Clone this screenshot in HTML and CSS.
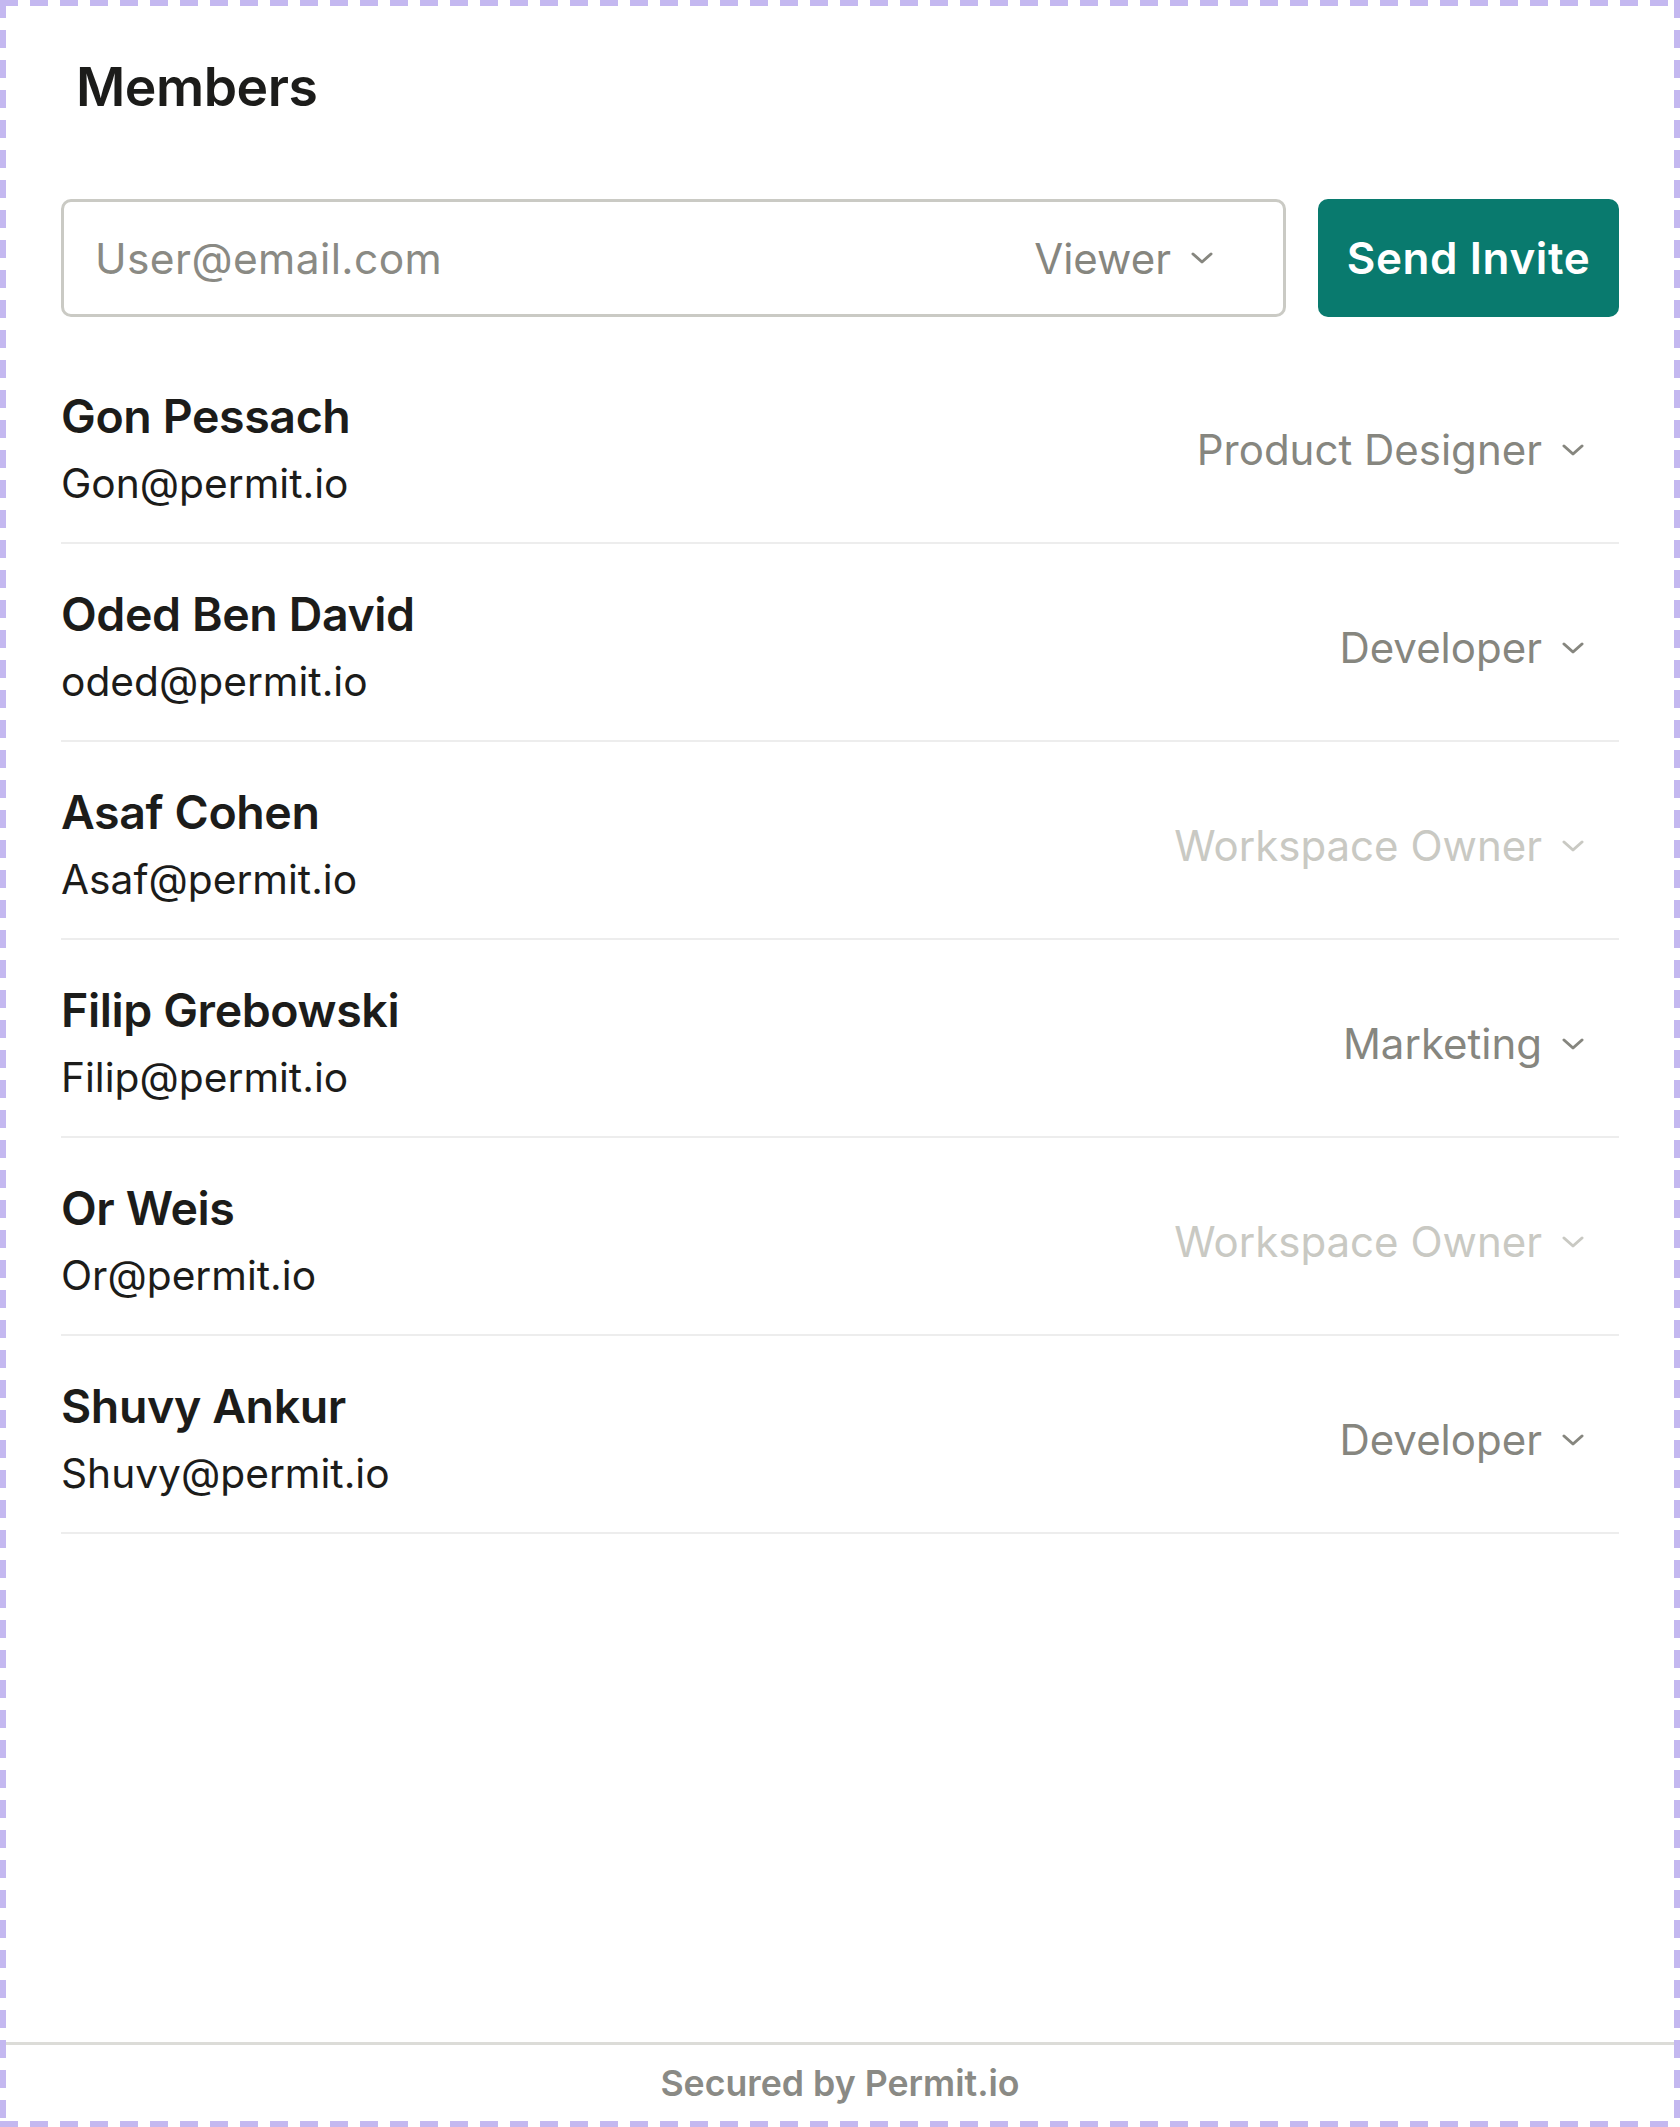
FILE: index.html
```html
<!DOCTYPE html>
<html lang="en">
<head>
<meta charset="utf-8">
<title>Members</title>
<link rel="stylesheet" href="styles.css">
</head>
<body>
<div class="frame">
  <main class="main">
    <h1 class="title">Members</h1>
    <div class="invite">
      <div class="field">
        <span class="placeholder">User@email.com</span>
        <span class="select">Viewer
          <svg class="chev" viewBox="0 0 22 12" width="22" height="12"><path d="M2 2 L11 10 L20 2" fill="none" stroke="currentColor" stroke-width="3" stroke-linecap="round" stroke-linejoin="round"/></svg>
        </span>
      </div>
      <button class="send">Send Invite</button>
    </div>
    <ul class="list">
      <li class="row">
        <div class="who"><div class="name">Gon Pessach</div><div class="email">Gon@permit.io</div></div>
        <div class="role">Product Designer <svg class="chev" viewBox="0 0 22 12" width="22" height="12"><path d="M2 2 L11 10 L20 2" fill="none" stroke="currentColor" stroke-width="3" stroke-linecap="round" stroke-linejoin="round"/></svg></div>
      </li>
      <li class="row">
        <div class="who"><div class="name">Oded Ben David</div><div class="email">oded@permit.io</div></div>
        <div class="role">Developer <svg class="chev" viewBox="0 0 22 12" width="22" height="12"><path d="M2 2 L11 10 L20 2" fill="none" stroke="currentColor" stroke-width="3" stroke-linecap="round" stroke-linejoin="round"/></svg></div>
      </li>
      <li class="row">
        <div class="who"><div class="name">Asaf Cohen</div><div class="email">Asaf@permit.io</div></div>
        <div class="role role-disabled">Workspace Owner <svg class="chev" viewBox="0 0 22 12" width="22" height="12"><path d="M2 2 L11 10 L20 2" fill="none" stroke="currentColor" stroke-width="3" stroke-linecap="round" stroke-linejoin="round"/></svg></div>
      </li>
      <li class="row">
        <div class="who"><div class="name">Filip Grebowski</div><div class="email">Filip@permit.io</div></div>
        <div class="role">Marketing <svg class="chev" viewBox="0 0 22 12" width="22" height="12"><path d="M2 2 L11 10 L20 2" fill="none" stroke="currentColor" stroke-width="3" stroke-linecap="round" stroke-linejoin="round"/></svg></div>
      </li>
      <li class="row">
        <div class="who"><div class="name">Or Weis</div><div class="email">Or@permit.io</div></div>
        <div class="role role-disabled">Workspace Owner <svg class="chev" viewBox="0 0 22 12" width="22" height="12"><path d="M2 2 L11 10 L20 2" fill="none" stroke="currentColor" stroke-width="3" stroke-linecap="round" stroke-linejoin="round"/></svg></div>
      </li>
      <li class="row">
        <div class="who"><div class="name">Shuvy Ankur</div><div class="email">Shuvy@permit.io</div></div>
        <div class="role">Developer <svg class="chev" viewBox="0 0 22 12" width="22" height="12"><path d="M2 2 L11 10 L20 2" fill="none" stroke="currentColor" stroke-width="3" stroke-linecap="round" stroke-linejoin="round"/></svg></div>
      </li>
    </ul>
  </main>
  <footer class="footer">Secured by Permit.io</footer>
</div>
</body>
</html>
```
FILE: styles.css
```css
* { box-sizing: border-box; }
html, body { margin: 0; padding: 0; background: #ffffff; }
body { font-family: Inter, "Noto Sans", sans-serif; color: #1c1c1a; }

.frame {
  height: 2127px;
  padding: 6px;
  display: flex;
  flex-direction: column;
  background:
    repeating-linear-gradient(90deg, #c4b8f0 0 18px, transparent 18px 30px) left top / 100% 6px no-repeat,
    repeating-linear-gradient(90deg, #c4b8f0 0 18px, transparent 18px 30px) left bottom / 100% 6px no-repeat,
    repeating-linear-gradient(180deg, #c4b8f0 0 18px, transparent 18px 30px) left top / 6px 100% no-repeat,
    repeating-linear-gradient(180deg, #c4b8f0 0 18px, transparent 18px 30px) right top / 6px 100% no-repeat,
    #ffffff;
}

.main {
  flex: 1;
  padding: 50px 55px 0 55px;
}

.title {
  margin: 0 0 81px 15px;
  font-size: 53.5px;
  line-height: 62px;
  font-weight: 600;
  letter-spacing: -0.5px;
}

.invite {
  display: flex;
  gap: 32px;
  height: 118px;
}

.field {
  flex: 1;
  border: 3px solid #cacac4;
  border-radius: 10px;
  display: flex;
  align-items: center;
  justify-content: space-between;
  padding: 0 70px 0 31px;
}

.placeholder {
  font-size: 42.5px;
  color: #8a8a84;
  letter-spacing: 0.4px;
}

.select {
  font-size: 42px;
  color: #86867f;
  display: flex;
  align-items: center;
  gap: 20px;
}

.chev { display: block; }

.send {
  width: 301px;
  border: none;
  border-radius: 10px;
  background: #097a6e;
  color: #ffffff;
  font-family: Inter, "Noto Sans", sans-serif;
  font-size: 44px;
  font-weight: 600;
  letter-spacing: 0.6px;
  padding: 0;
}

.list {
  list-style: none;
  margin: 29px 0 0 0;
  padding: 0;
}

.row {
  height: 198px;
  border-bottom: 2px solid #ededed;
  display: flex;
  align-items: center;
  justify-content: space-between;
  padding: 11px 35px 0 0;
}

.name {
  font-size: 46.5px;
  line-height: 56px;
  font-weight: 600;
  letter-spacing: -0.4px;
}

.email {
  font-size: 40.7px;
  line-height: 56px;
  margin-top: 12px;
  font-weight: 400;
}

.role {
  font-size: 42px;
  color: #86867f;
  display: flex;
  align-items: center;
  gap: 20px;
}

.role-disabled { color: #c9c9c3; }

.footer {
  height: 79px;
  border-top: 3px solid #dcdcd8;
  display: flex;
  align-items: center;
  justify-content: center;
  font-size: 35.7px;
  font-weight: 600;
  color: #8a8a85;
}
```
